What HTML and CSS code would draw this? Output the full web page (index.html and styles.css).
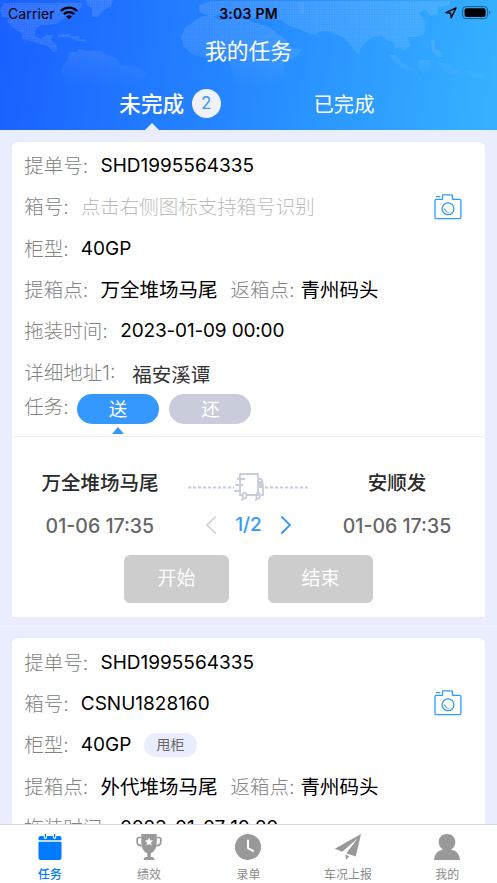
FILE: index.html
```html
<!DOCTYPE html>
<html lang="zh-CN">
<head>
<meta charset="utf-8">
<title>我的任务</title>
<link rel="stylesheet" href="styles.css">
</head>
<body>
<div class="app">
  <header class="header">
    <svg class="map" width="497" height="130" viewBox="0 0 497 130">
      <defs>
        <pattern id="dots" width="2.5" height="2.5" patternUnits="userSpaceOnUse"><rect width="2.5" height="2.5" fill="#fff" opacity=".45"/><rect width="1.5" height="1.6" fill="#fff" opacity=".6"/></pattern>
        <linearGradient id="fade" x1="0" y1="0" x2="0" y2="1"><stop offset="0" stop-color="#fff" stop-opacity=".2"/><stop offset=".35" stop-color="#fff" stop-opacity=".17"/><stop offset=".68" stop-color="#fff" stop-opacity="0"/></linearGradient>
        <mask id="m" maskUnits="userSpaceOnUse" x="0" y="0" width="497" height="130"><rect width="497" height="130" fill="url(#fade)"/></mask>
      </defs>
      <g mask="url(#m)" fill="url(#dots)">
        <path d="M0 10L4 3H83L79 10H73L67 17L61 21L56 24L50 25H41L35 30V36L41 39L46 35H53L51 40L57 45L58 51L53 52L48 46L39 44L31 41L23 39L21 33L12 27L7 22L9 18L2 17Z"/>
        <path d="M86 0H113L111 6L103 11L97 17H92V8L87 5Z"/>
        <path d="M58 34H70V36H79V39H86V41H78L69 37H58Z"/>
        <path d="M69 52H77L79 49L88 51L102 51L107 55L116 58L121 65L137 67L146 72L146 78L139 80L135 88H67L66 79L61 74L63 66L68 60Z"/>
        <path d="M185 28L196 20L203 16H213L220 20L235 18L247 20L263 25L270 28L278 34L285 39L292 48L302 49L297 56L287 61L283 69L286 76L270 88H236L232 69L229 61L222 57L204 58L192 54L184 47L181 37Z"/>
        <path d="M199 12V5L211 1H450V5L438 7V13L431 16L425 9L419 13L425 22L425 33L417 37H407L411 45L404 51L400 47L394 49V43L386 40L382 36L374 37L367 41L360 49V56L355 51L348 42L343 37L334 34L328 31H322L314 35L305 32L299 29L289 26L281 20H276L269 16L263 20L257 17L249 19L243 13L233 17L223 13L215 16H208L204 14Z"/>
        <path d="M431 40H435V49L443 53V57H437L432 50ZM389 55H396L401 61L408 66L417 70V74L406 70L396 64ZM419 60H430V70L424 74L418 68ZM437 61L449 65L456 69L465 74L459 77L443 71ZM464 71H475L484 75V79L470 76ZM297 2H304V12L307 15L300 13Z"/>
      </g>
    </svg>
    <div class="status">
      <div class="carrier"><span>Carrier</span>
        <svg width="18" height="14" viewBox="0 0 18 14" fill="none" stroke="#000" stroke-width="2.3"><path d="M.9 5C5.4.5 12.6.5 17.1 5M3.9 8.2C6.7 5.5 11.3 5.5 14.1 8.2"/><path d="M9 13.3L6 10.4Q9 8 12 10.4Z" fill="#000" stroke="none"/></svg>
      </div>
      <div class="clock">3:03 PM</div>
      <div class="indicators">
        <svg width="12" height="12" viewBox="0 0 12 12" fill="none" stroke="#000" stroke-width="1.4" stroke-linejoin="round"><path d="M11 1L1 5.6L5.7 6.3L6.2 11Z"/></svg>
        <svg width="29" height="14" viewBox="0 0 29 14"><rect x=".6" y=".6" width="25" height="12" rx="3.5" fill="none" stroke="#000" stroke-opacity=".45"/><rect x="2.6" y="2.3" width="21" height="8.7" rx="2" /><path d="M27.2 4.5Q29.3 6.6 27.2 8.7Z" opacity=".5"/></svg>
      </div>
    </div>
    <h1 class="title">我的任务</h1>
    <nav class="tabs">
      <div class="tab tab-on"><span>未完成</span><b class="count">2</b><i class="notch"></i></div>
      <div class="tab"><span>已完成</span></div>
    </nav>
  </header>

  <main class="list">
    <section class="card">
      <div class="row"><span class="label">提单号:</span><span class="num">SHD1995564335</span></div>
      <div class="row"><span class="label l2">箱号:</span><span class="placeholder">点击右侧图标支持箱号识别</span>
        <svg class="camera" width="28" height="26" viewBox="0 0 28 26" fill="none" stroke="#3598fb" stroke-width="1.3" stroke-linejoin="round"><path d="M2.5 5.3H8.5V1.5Q8.5.8 9.3.8H17.6Q18.4.8 18.4 1.6V5.3H25.5Q26.9 5.3 26.9 6.7V23.2Q26.9 24.6 25.5 24.6H2.5Q1 24.6 1 23.2V6.7Q1 5.3 2.5 5.3ZM2 2.7H6.3"/><circle cx="14" cy="14.8" r="5.9"/><path d="M10.5 14.5Q10.7 17.7 13.8 18.4M15.5 18.4L14.7 18.5" stroke-width="1"/></svg></div>
      <div class="row"><span class="label l2">柜型:</span><span class="num">40GP</span></div>
      <div class="row"><span class="label">提箱点:</span><span class="value place">万全堆场马尾</span><span class="label lr">返箱点:</span><span class="value">青州码头</span></div>
      <div class="row"><span class="label l4">拖装时间:</span><span class="num date">2023-01-09 00:00</span></div>
      <div class="row"><span class="label l5">详细地址1:</span><span class="value address">福安溪谭</span></div>
      <div class="task"><span class="label l2">任务:</span><div class="pill pill-on">送<i class="pointer"></i></div><div class="pill">还</div></div>
      <div class="trip">
        <div class="route">
          <div class="stop"><strong>万全堆场马尾</strong><span>01-06 17:35</span></div>
          <div class="middle">
            <svg width="122" height="32" viewBox="0 0 122 32" fill="none" stroke="#c9cddb" stroke-width="2"><path d="M1 17.5H47M78 17.5H121" stroke-dasharray="3.2 1.8"/><path d="M55 25H53V4H71V25H60M53 8.5H50M71 9H73.6Q74.6 9 74.9 10L76 15V25H74M61 25H69" stroke-width="1.8"/><path d="M50 9H58M48.5 15H56M47 21H52" stroke-width="2"/><path d="M72.5 12H75V17H72.5Z" fill="#c9cddb"/><ellipse cx="57.5" cy="25.7" rx="1.9" ry="3" stroke-width="1.7"/><ellipse cx="71" cy="25.7" rx="1.9" ry="3" stroke-width="1.7"/><path d="M54 30L57 29M68 30L71 29" stroke-width="1.5"/></svg>
            <div class="pager"><svg width="12" height="20" viewBox="0 0 12 20" fill="none" stroke="#d0d0d0" stroke-width="1.6"><path d="M10.7 1.5L2 10L10.7 18.5"/></svg><b>1/2</b><svg width="12" height="20" viewBox="0 0 12 20" fill="none" stroke="#3598fb" stroke-width="1.8"><path d="M1.3 1.5L10 10L1.3 18.5"/></svg></div>
          </div>
          <div class="stop"><strong>安顺发</strong><span>01-06 17:35</span></div>
        </div>
        <div class="actions"><div class="button">开始</div><div class="button">结束</div></div>
      </div>
    </section>
    <div class="separator"></div>
    <section class="card">
      <div class="row"><span class="label">提单号:</span><span class="num">SHD1995564335</span></div>
      <div class="row"><span class="label l2">箱号:</span><span class="num">CSNU1828160</span>
        <svg class="camera" width="28" height="26" viewBox="0 0 28 26" fill="none" stroke="#3598fb" stroke-width="1.3" stroke-linejoin="round"><path d="M2.5 5.3H8.5V1.5Q8.5.8 9.3.8H17.6Q18.4.8 18.4 1.6V5.3H25.5Q26.9 5.3 26.9 6.7V23.2Q26.9 24.6 25.5 24.6H2.5Q1 24.6 1 23.2V6.7Q1 5.3 2.5 5.3ZM2 2.7H6.3"/><circle cx="14" cy="14.8" r="5.9"/><path d="M10.5 14.5Q10.7 17.7 13.8 18.4M15.5 18.4L14.7 18.5" stroke-width="1"/></svg></div>
      <div class="row"><span class="label l2">柜型:</span><span class="num">40GP</span><span class="tag">甩柜</span></div>
      <div class="row"><span class="label">提箱点:</span><span class="value place">外代堆场马尾</span><span class="label lr">返箱点:</span><span class="value">青州码头</span></div>
      <div class="row"><span class="label l4">拖装时间:</span><span class="num date">2023-01-07 10:20</span></div>
    </section>
  </main>

  <footer class="tabbar">
    <div class="item item-on"><svg width="28" height="28" viewBox="0 0 28 28" fill="currentColor"><path d="M2.5 8.8H25.5V24.5Q25.5 27 23 27H5Q2.5 27 2.5 24.5Z"/><path d="M2.5 7.3V5Q2.5 3 4.7 3H7.7V4Q7.7 6 9.3 6T11 4V3H17V4Q17 6 18.7 6T20.3 4V3H23.3Q25.5 3 25.5 5V7.3Z"/><path d="M8.7 1H10V4.5H8.7ZM18 1H19.3V4.5H18Z"/></svg><span>任务</span></div>
    <div class="item"><svg width="28" height="28" viewBox="0 0 28 28" fill="currentColor"><path d="M6.3 1H21.7V9Q21.7 18 15.7 20.2V24H17.5Q19.5 24.5 19.5 27H8.5Q8.5 24.5 10.5 24H12.3V20.2Q6.3 18 6.3 9Z"/><path d="M6.4 4.5H4Q2.2 4.5 2.2 6.2V9Q2.2 12.6 6.9 12.6M21.6 4.5H24Q25.8 4.5 25.8 6.2V9Q25.8 12.6 21.1 12.6" fill="none" stroke="currentColor" stroke-width="1.7"/><path d="M14 4.4L15.2 7.2L18.2 7.5L16 9.5L16.6 12.5L14 10.9L11.4 12.5L12 9.5L9.8 7.5L12.8 7.2Z" fill="#fff"/></svg><span>绩效</span></div>
    <div class="item"><svg width="28" height="28" viewBox="0 0 28 28"><circle cx="14" cy="14" r="13" fill="currentColor"/><path d="M14 6.8V15.2L19.8 18.3" fill="none" stroke="#fff" stroke-width="2"/></svg><span>录单</span></div>
    <div class="item"><svg width="28" height="28" viewBox="0 0 28 28" fill="currentColor"><path d="M27 1L.8 15.7L8.3 18.7L23.7 5.2L12.3 20.3L21.8 23.6Z"/><path d="M11.5 21.8L15.2 23.1L11.9 27Z"/></svg><span>车况上报</span></div>
    <div class="item"><svg width="28" height="28" viewBox="0 0 28 28" fill="currentColor"><path d="M14 1C19 1 22.3 4.5 22.3 9Q22.3 13.7 18 16.4Q26.5 18.2 27 27H1Q1.5 18.2 10 16.4Q5.7 13.7 5.7 9C5.7 4.5 9 1 14 1Z"/></svg><span>我的</span></div>
  </footer>
</div>
</body>
</html>
```
FILE: styles.css
```css
* { box-sizing: border-box; }
html, body { margin: 0; overflow: hidden; }
body { font-family: Inter, "Noto Sans CJK SC", sans-serif; color: #000; }
i { font-style: normal; }
svg { display: block; flex: none; }
.app { width: 497px; height: 883px; display: flex; flex-direction: column; overflow: hidden; background: #eaedfd; }
.header { position: relative; flex: none; height: 129.5px; background: linear-gradient(100deg, #1a61ff 2%, #2484ff 44%, #35b1ff 98%); color: #fff; }
.map { position: absolute; left: 0; top: 0; }
.status { position: relative; height: 26px; display: grid; grid-template-columns: 1fr auto 1fr; align-items: center; padding: 0 6px 0 8px; color: #000; font-size: 14px; }
.carrier { display: flex; align-items: center; gap: 5px; letter-spacing: .1px; }
.clock { font-weight: 600; letter-spacing: .25px; margin-left: -2px; }
.indicators { display: flex; justify-content: flex-end; align-items: center; gap: 5px; }
.title { position: relative; margin: 0; height: 49px; line-height: 50px; text-align: center; font-size: 21.8px; font-weight: 400; }
.tabs { position: relative; height: 54.5px; display: grid; grid-template-columns: 152px 150px; column-gap: 41px; padding-left: 76px; }
.tab { position: relative; display: flex; align-items: center; justify-content: center; font-size: 20.3px; height: 57px; padding-bottom: 1px; }
.tab-on { width: 188px; gap: 7.5px; font-size: 21.6px; font-weight: 500; padding-bottom: 0; }
.tab-on span { padding-bottom: 2px; }
.count { width: 29px; height: 29px; border-radius: 50%; background: #f0f1fa; color: #3598fb; font-size: 17px; font-weight: 400; line-height: 29px; text-align: center; }
.notch { position: absolute; left: 69px; top: 47.5px; border: 7.5px solid transparent; border-top: 0; border-bottom: 7.5px solid #eaedfd; }
.list { flex: 1; min-height: 0; overflow: hidden; padding: 12px 12.3px 0; }
.card { height: 475px; padding-top: 3.5px; background: #fff; border-radius: 6px 6px 0 0; }
.row { height: 41.3px; display: flex; align-items: center; padding: 0 23px 0 12px; font-size: 19.5px; white-space: nowrap; }
.label { width: 76.2px; flex: none; color: #828282; font-weight: 300; font-size: 19.5px; }
.row .label, .value, .placeholder { padding-bottom: 2px; }
.l2 { width: 56.5px; }
.l4 { width: 96px; }
.l5 { width: 108px; }
.lr { width: 70px; }
.num { font-size: 19px; }
.date { letter-spacing: -.17px; }
.place { width: 130px; }
.placeholder { color: #bcbcbc; font-weight: 300; }
.camera { margin-left: auto; }
.address { color: #333; padding: 2px 0 0; }
.task { height: 43px; display: flex; align-items: flex-start; padding: 0 12px; }
.task .label { line-height: 29px; width: 52.7px; }
.pill { position: relative; width: 82px; height: 30px; margin: 1px 10.5px 0 0; border-radius: 15px; background: #c9cddb; color: #fff; font-size: 18.5px; line-height: 30px; text-align: center; }
.pill-on { background: #3598ff; }
.pointer { position: absolute; left: 35px; top: 33px; border: 6.5px solid transparent; border-top: 0; border-bottom: 7px solid #3598ff; }
.trip { border-top: 1px solid #eee; padding-top: 26px; }
.route { display: grid; grid-template-columns: 175.2px 122px 175px; }
.stop { display: flex; flex-direction: column; align-items: center; font-size: 19.5px; }
.stop strong { height: 41px; line-height: 40px; font-size: 19.5px; font-weight: 500; color: #2a2a2a; }
.stop span { height: 42px; line-height: 44px; font-weight: 500; color: #666; }
.middle { padding-top: 7px; }
.pager { height: 43px; padding-top: 3px; display: flex; align-items: center; justify-content: center; gap: 18px; color: #3598fb; font-size: 19px; }
.pager b { font-weight: 500; }
.actions { display: flex; justify-content: center; gap: 38.5px; padding-top: 9px; }
.button { width: 105.5px; height: 48px; border-radius: 6px; background: #cdcdcd; color: #fff; font-size: 19px; font-weight: 400; line-height: 48px; text-align: center; }
.separator { height: 1px; margin: 9.5px -12.3px 11px; background: #f3f4fe; }
.tag { height: 24px; width: 53px; margin-left: 12.7px; border-radius: 12px; background: #eaedfd; color: #666; font-size: 14px; line-height: 23px; text-align: center; }
.tabbar { height: 59.5px; flex: none; display: grid; grid-template-columns: repeat(5, 1fr); background: #fff; border-top: 1px solid #d5d5da; }
.item { display: flex; flex-direction: column; align-items: center; padding-top: 8.5px; color: #999; font-size: 12px; }
.item span { line-height: 16px; margin-top: 6px; color: #8b8b8b; white-space: nowrap; }
.item-on, .item-on span { color: #007aff; }
.item-on span { font-weight: 500; }
```
